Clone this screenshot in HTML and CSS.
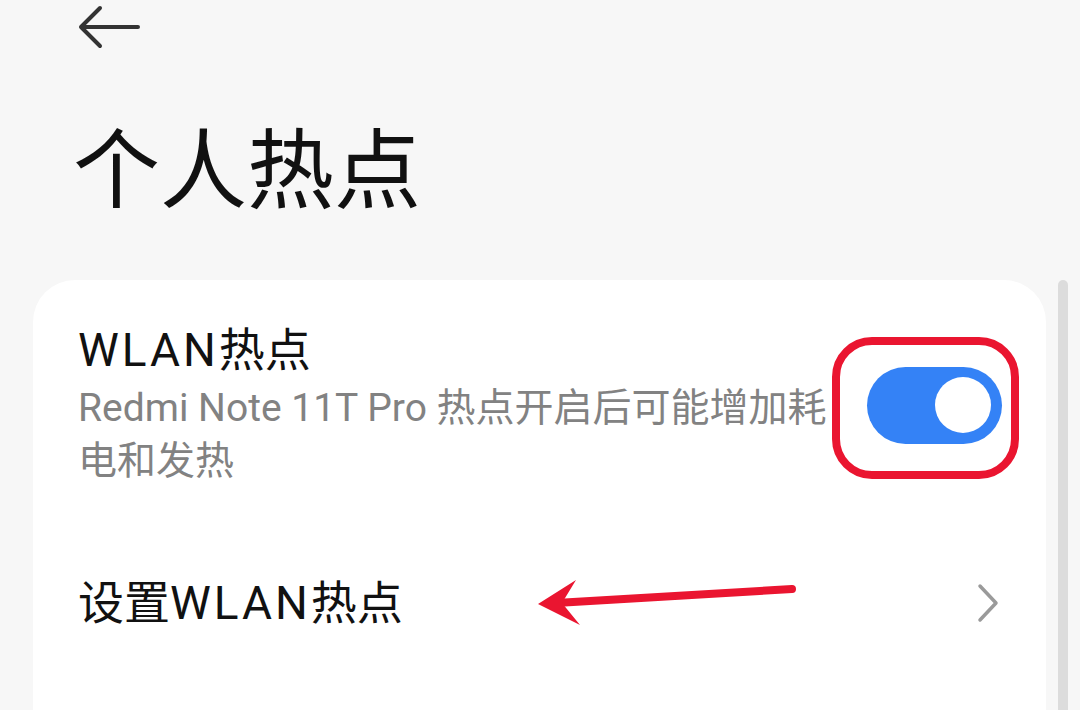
FILE: index.html
```html
<!DOCTYPE html>
<html lang="zh">
<head>
<meta charset="utf-8">
<link rel="stylesheet" href="styles.css">
</head>
<body>
<div class="page">
  <header class="topbar">
    <svg class="back" width="64" height="46" viewBox="0 0 64 46">
      <path d="M22 3 L3 22 L22 41 M3 22 H60" fill="none" stroke="#333" stroke-width="4" stroke-linecap="round" stroke-linejoin="round"/>
    </svg>
  </header>
  <h1 class="title">个人热点</h1>
  <section class="card">
    <div class="row row-main">
      <div class="text">
        <div class="row-title"><span class="lat">WLAN</span>热点</div>
        <div class="row-sub">Redmi Note 11T Pro 热点开启后可能增加耗电和发热</div>
      </div>
      <div class="toggle"><span class="knob"></span></div>
    </div>
    <div class="row row-link">
      <div class="row-title">设置<span class="lat">WLAN</span>热点</div>
      <svg class="chev" width="24" height="40" viewBox="0 0 24 40">
        <path d="M4 3 L20 20 L4 37" fill="none" stroke="#9a9a9a" stroke-width="3.5" stroke-linecap="round" stroke-linejoin="round"/>
      </svg>
    </div>
  </section>
  <div class="scrollbar"></div>
  <div class="redbox"></div>
  <svg class="redarrow" width="1080" height="710" viewBox="0 0 1080 710">
    <line x1="792" y1="589" x2="556" y2="603" stroke="#ea1530" stroke-width="8" stroke-linecap="round"/>
    <polygon points="538,604 576,580 562,603 580,625" fill="#ea1530"/>
  </svg>
</div>
</body>
</html>
```
FILE: styles.css
```css
html, body {
  margin: 0;
  padding: 0;
  background: #f7f7f7;
  width: 1080px;
  height: 710px;
  overflow: hidden;
  font-family: Roboto, "Noto Sans CJK SC", sans-serif;
}
.page {
  position: relative;
  width: 1080px;
  height: 710px;
}
.topbar {
  height: 60px;
  padding: 5px 0 0 78px;
  box-sizing: border-box;
}
.back { display: block; }
.title {
  margin: 0;
  padding: 57px 0 0 73px;
  font-size: 87px;
  line-height: 110px;
  font-weight: 400;
  color: #111;
  height: 160px;
  box-sizing: border-box;
}
.card {
  margin: 60px 0 0 33px;
  width: 1013px;
  height: 460px;
  background: #fff;
  border-radius: 42px 42px 0 0;
}
.row {
  display: flex;
  align-items: center;
  padding: 0 44px 0 45px;
}
.row-main {
  padding-top: 42px;
  padding-bottom: 42px;
  gap: 30px;
}
.text { flex: 1; min-width: 0; }
.row-title {
  font-size: 46px;
  line-height: 56px;
  color: #111;
}
.lat {
  letter-spacing: 3px;
}
.row-sub {
  margin-top: 4px;
  font-size: 39px;
  line-height: 53px;
  color: #828282;
}
.toggle {
  width: 135px;
  height: 77px;
  border-radius: 39px;
  background: #3482f6;
  flex: none;
  display: flex;
  align-items: center;
  justify-content: flex-end;
  padding-right: 11px;
  box-sizing: border-box;
}
.knob {
  width: 56px;
  height: 56px;
  border-radius: 50%;
  background: #fff;
}
.row-link {
  height: 146px;
  justify-content: space-between;
  padding-right: 46px;
}
.chev { display: block; }
.scrollbar {
  position: absolute;
  left: 1058px;
  top: 280px;
  width: 10px;
  height: 440px;
  border-radius: 5px;
  background: #dcdcdc;
}
.redbox {
  position: absolute;
  left: 832px;
  top: 337px;
  width: 187px;
  height: 142px;
  box-sizing: border-box;
  border: 8px solid #ea1530;
  border-radius: 40px;
}
.redarrow {
  position: absolute;
  left: 0;
  top: 0;
}
```
